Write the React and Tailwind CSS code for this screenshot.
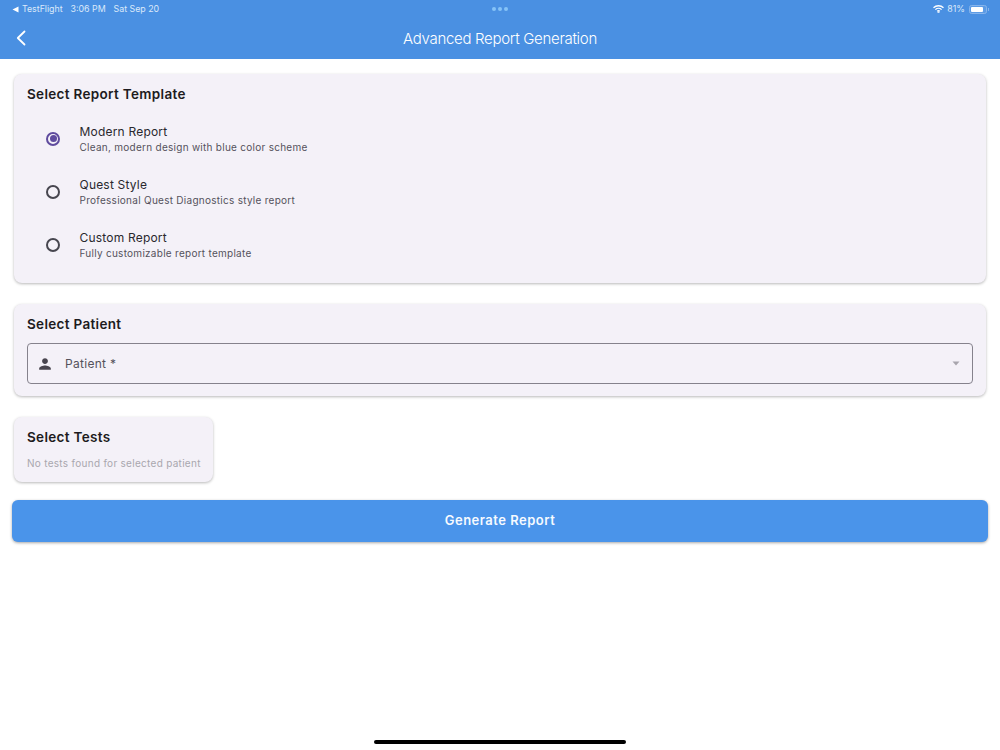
import React from "react";

const font = { fontFamily: "Inter, 'Liberation Sans', sans-serif" };

function Radio({ on }) {
  return (
    <span className={`-mt-[2px] flex h-[14px] w-[14px] shrink-0 items-center justify-center rounded-full border-2 ${on ? "border-[#5f4b9e]" : "border-[#47464f]"}`}>
      {on && <span className="h-[7px] w-[7px] rounded-full bg-[#5f4b9e]" />}
    </span>
  );
}

function Option({ on, title, sub }) {
  return (
    <div className="flex h-[53px] items-center pl-[19px]">
      <Radio on={on} />
      <div className="-mt-[2px] ml-[19.5px] flex flex-col">
        <span className="text-[12px] leading-[18px] tracking-[0.2px] text-[#2a282e]">{title}</span>
        <span className="text-[10px] leading-[13px] tracking-[0.27px] text-[#55525c]">{sub}</span>
      </div>
    </div>
  );
}

const cardShadow = "shadow-[0_1px_3px_rgba(0,0,0,0.28)]";
const heading = "text-[13.5px] font-semibold leading-[19px] tracking-[0.32px] text-[#1d1b20]";

export default function App() {
  return (
    <div style={font} className="relative flex h-[750px] w-[1000px] flex-col overflow-hidden bg-white">
      <header className="flex h-[59px] flex-col bg-[#4a90e2] text-white">
        <div className="flex h-[18px] items-center justify-between pl-[12px] pr-[11px] text-[8.8px] text-[#dbe9fa]">
          <div className="flex w-[199px] items-center">
            <svg width="7" height="7" viewBox="0 0 7 7" className="mr-[3px]"><path d="M0.5 3.5 6.5 0.5V6.5Z" fill="#fff" /></svg>
            <span>TestFlight</span>
            <span className="ml-[8px]">3:06 PM</span>
            <span className="ml-[8px]">Sat Sep 20</span>
          </div>
          <div className="flex gap-[2px]">
            <span className="h-[4px] w-[4px] rounded-full bg-[#86c3f7]" />
            <span className="h-[4px] w-[4px] rounded-full bg-[#86c3f7]" />
            <span className="h-[4px] w-[4px] rounded-full bg-[#86c3f7]" />
          </div>
          <div className="flex w-[200px] items-center justify-end">
            <svg width="11" height="8" viewBox="0 0 22 16" fill="none" stroke="#fff" strokeWidth="2.6" className="mr-[3px]">
              <path d="M1 5.5a14.5 14.5 0 0 1 20 0" />
              <path d="M4.8 9.2a9 9 0 0 1 12.4 0" />
              <path d="M8.4 12.6a3.8 3.8 0 0 1 5.2 0" />
              <circle cx="11" cy="14.6" r="0.6" fill="#fff" />
            </svg>
            <span>81%</span>
            <span className="ml-[4px] flex h-[9px] w-[18px] items-center rounded-[2.5px] border border-[#86b4ec] bg-white/10 p-[1px]">
              <span className="h-full w-[12px] rounded-[1px] bg-white" />
            </span>
            <span className="ml-[1px] h-[3px] w-[1px] bg-[#86b4ec]" />
          </div>
        </div>
        <div className="relative flex flex-1 items-center justify-center pt-[2px]">
          <svg width="12" height="16" viewBox="0 0 12 16" fill="none" stroke="#fff" strokeWidth="1.8" strokeLinecap="round" strokeLinejoin="round" className="absolute left-[15px] top-[12px]">
            <path d="M9.5 1.5 2.8 8l6.7 6.5" />
          </svg>
          <h1 className="text-[15px] font-light tracking-[-0.3px] text-white">Advanced Report Generation</h1>
        </div>
      </header>

      <main className="flex flex-col items-stretch px-[14px] pt-[15px]">
        <section className={`h-[209px] rounded-[8px] bg-[#f4f1f8] px-[13px] pt-[11px] ${cardShadow}`}>
          <h2 className={`mb-[9px] ${heading}`}>Select Report Template</h2>
          <Option on title="Modern Report" sub="Clean, modern design with blue color scheme" />
          <Option title="Quest Style" sub="Professional Quest Diagnostics style report" />
          <Option title="Custom Report" sub="Fully customizable report template" />
        </section>

        <section className={`mt-[21px] h-[92px] rounded-[8px] bg-[#f4f1f8] px-[13px] pt-[11px] ${cardShadow}`}>
          <h2 className={`mb-[9px] ${heading}`}>Select Patient</h2>
          <div className="flex h-[41px] items-center rounded-[4px] border border-[#85828c] pl-[10px] pr-[12px]">
            <svg width="14" height="14" viewBox="0 0 24 24" fill="#49454f">
              <path d="M12 12c2.76 0 5-2.24 5-5s-2.24-5-5-5-5 2.24-5 5 2.24 5 5 5zm0 2.5c-3.34 0-10 1.68-10 5V22h20v-2.5c0-3.32-6.66-5-10-5z" />
            </svg>
            <span className="ml-[13px] flex-1 pt-[1px] text-[12px] tracking-[0.3px] text-[#55525c]">Patient *</span>
            <svg width="8" height="5" viewBox="0 0 8 5"><path d="M0.5 0.5h7L4 4.5Z" fill="#a8a5ad" /></svg>
          </div>
        </section>

        <section className={`mt-[21px] h-[65px] w-[199px] rounded-[8px] bg-[#f4f1f8] px-[13px] pt-[11px] ${cardShadow}`}>
          <h2 className={`mb-[8px] ${heading}`}>Select Tests</h2>
          <p className="whitespace-nowrap text-[10px] leading-[16px] tracking-[0.29px] text-[#a9a7ae]">No tests found for selected patient</p>
        </section>

        <button className="-mx-[2px] mt-[18px] flex h-[42px] items-center justify-center rounded-[6px] bg-[#4a94ea] text-[13px] font-semibold tracking-[0.5px] text-[#f6faff] shadow-[0_1px_3px_rgba(0,0,0,0.35)]">
          Generate Report
        </button>
      </main>

      <div className="absolute bottom-[6px] left-[374px] h-[4px] w-[252px] rounded-full bg-black" />
    </div>
  );
}
